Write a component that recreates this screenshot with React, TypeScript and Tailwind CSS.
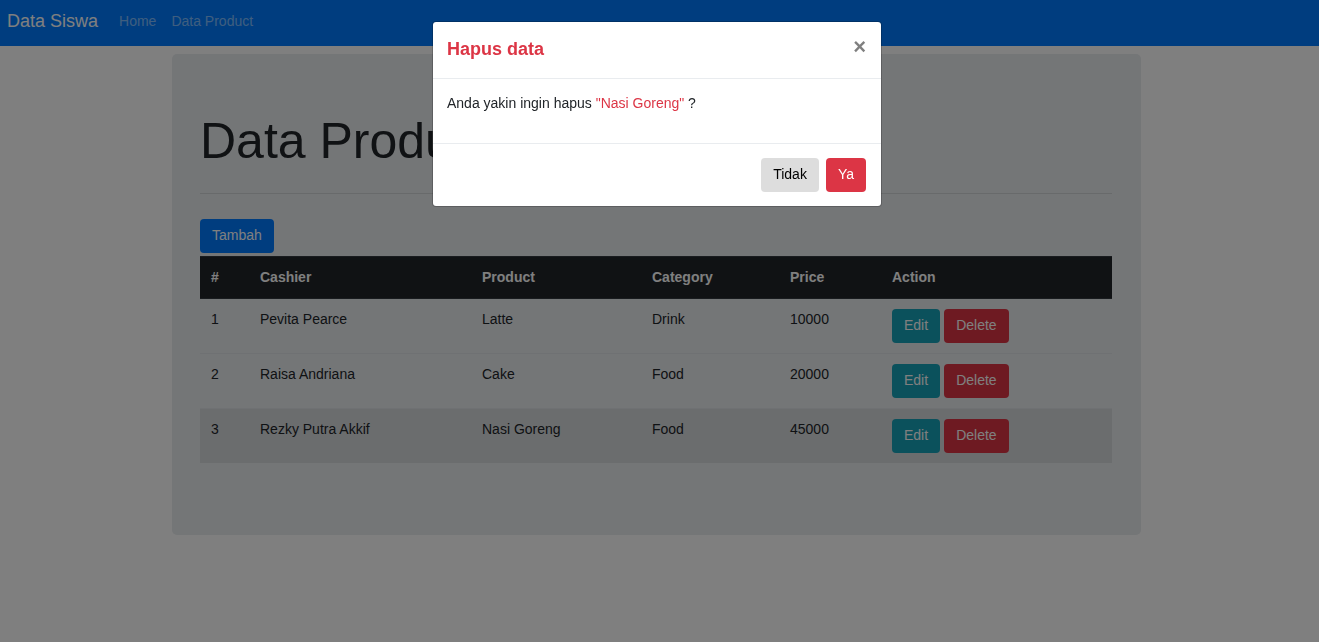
import React from "react";

type Product = {
  id: number;
  cashier: string;
  product: string;
  category: string;
  price: number;
};

const products: Product[] = [
  { id: 1, cashier: "Pevita Pearce", product: "Latte", category: "Drink", price: 10000 },
  { id: 2, cashier: "Raisa Andriana", product: "Cake", category: "Food", price: 20000 },
  { id: 3, cashier: "Rezky Putra Akkif", product: "Nasi Goreng", category: "Food", price: 45000 },
];

const columns = [
  { label: "#", width: "w-[49px]" },
  { label: "Cashier", width: "w-[222px]" },
  { label: "Product", width: "w-[170px]" },
  { label: "Category", width: "w-[138px]" },
  { label: "Price", width: "w-[102px]" },
  { label: "Action", width: "w-[231px]" },
];

function Button({ className, children }: { className: string; children: React.ReactNode }) {
  return (
    <button type="button" className={`h-[34px] rounded px-3 pb-0.5 text-center ${className}`}>
      {children}
    </button>
  );
}

function Navbar() {
  return (
    <nav className="flex h-[46px] items-center bg-[#007bff] px-[7px] pb-1">
      <a href="#" className="mr-[21px] text-lg text-white">
        Data Siswa
      </a>
      <ul className="flex gap-[15px] text-white/50">
        <li>
          <a href="#home">Home</a>
        </li>
        <li>
          <a href="#product">Data Product</a>
        </li>
      </ul>
    </nav>
  );
}

function ProductTable({ selected }: { selected: number }) {
  return (
    <table className="mt-[3px] w-full border-separate border-spacing-0 text-left">
      <thead className="bg-[#212529] text-white">
        <tr>
          {columns.map((c) => (
            <th
              key={c.label}
              scope="col"
              className={`h-[43px] border-y border-[#32383e] px-[11px] pb-0.5 font-bold ${c.width}`}
            >
              {c.label}
            </th>
          ))}
        </tr>
      </thead>
      <tbody className="[&>tr+tr>td]:border-t [&>tr+tr>td]:border-[#dee2e6]">
        {products.map((p) => (
          <tr key={p.id} className={p.id === selected ? "bg-black/[0.075]" : ""}>
            <td className="px-[11px] py-2.5 align-top">{p.id}</td>
            <td className="px-[11px] py-2.5 align-top">{p.cashier}</td>
            <td className="px-[11px] py-2.5 align-top">{p.product}</td>
            <td className="px-[11px] py-2.5 align-top">{p.category}</td>
            <td className="px-[11px] py-2.5 align-top">{p.price}</td>
            <td className="px-[11px] py-2.5 align-top">
              <div className="flex gap-1">
                <Button className="bg-[#17a2b8] text-white">Edit</Button>
                <Button className="bg-[#dc3545] text-white">Delete</Button>
              </div>
            </td>
          </tr>
        ))}
      </tbody>
    </table>
  );
}

function DeleteDialog({ name }: { name: string }) {
  return (
    <div className="fixed inset-0 bg-black/50 pr-[5px] pt-[21px]">
      <div
        role="dialog"
        aria-modal="true"
        aria-labelledby="dialog-title"
        className="mx-auto max-w-[450px] rounded border border-black/20 bg-white bg-clip-padding"
      >
        <div className="flex h-[57px] items-start justify-between border-b border-[#e9ecef] pt-3.5 pr-[15px] pl-3.5">
          <h5 id="dialog-title" className="text-lg leading-[26px] font-bold text-[#dc3545]">
            Hapus data
          </h5>
          <button
            type="button"
            aria-label="Close"
            className="text-[22px] leading-[22px] font-bold text-black/50"
          >
            ×
          </button>
        </div>
        <div className="px-3.5 pt-3.5 pb-[30px]">
          <p>
            Anda yakin ingin hapus <span className="text-[#dc3545]">"{name}"</span> ?
          </p>
        </div>
        <div className="flex justify-end gap-[7px] border-t border-[#e9ecef] py-3.5 pr-[15px] pl-3.5">
          <Button className="bg-[#dddddd] text-black">Tidak</Button>
          <Button className="bg-[#dc3545] text-white">Ya</Button>
        </div>
      </div>
    </div>
  );
}

export default function App() {
  return (
    <div className="min-h-screen bg-white font-['Liberation_Sans',Arial,sans-serif] text-[14px] leading-5 text-[#212529]">
      <Navbar />
      <div className="pt-2 pr-[6px]">
        <main className="mx-auto max-w-[969px] rounded-[5px] bg-[#e9ecef] pt-[57px] pr-[29px] pb-[72px] pl-7">
          <h1 className="text-[50px] leading-[60px]">Data Product</h1>
          <hr className="mt-[22px] mb-[25px] border-black/10" />
          <Button className="bg-[#007bff] text-white">Tambah</Button>
          <ProductTable selected={3} />
        </main>
      </div>
      <DeleteDialog name="Nasi Goreng" />
    </div>
  );
}
